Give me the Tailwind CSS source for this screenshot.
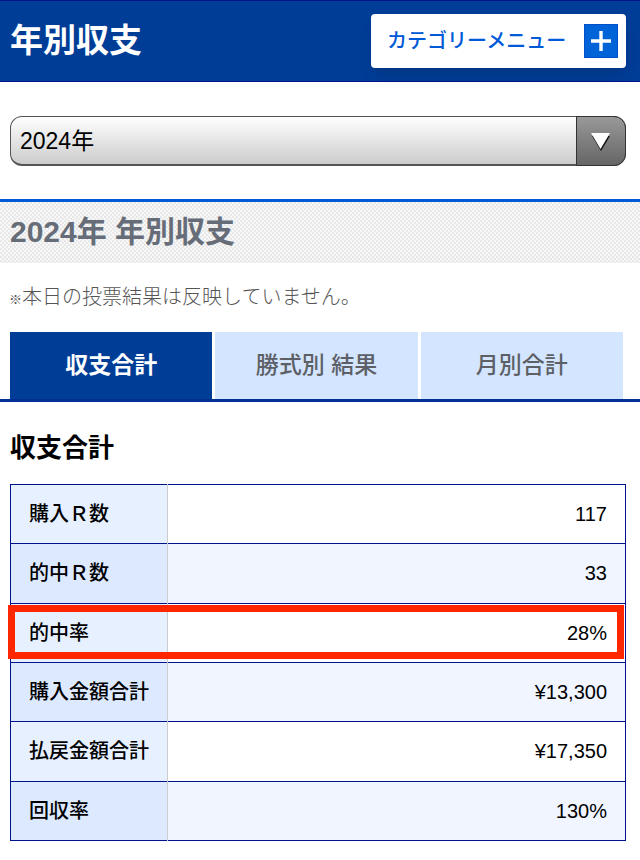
<!DOCTYPE html>
<html lang="ja">
<head>
  <meta charset="UTF-8" />
  <meta name="viewport" content="width=device-width, initial-scale=1.0"/>
  <title>年別収支</title>
  <script src="https://cdn.jsdelivr.net/npm/@tailwindcss/browser@4"></script>
</head>
<body class="bg-white text-black font-['Liberation_Sans','Noto_Sans_CJK_JP',sans-serif]">
  <!-- Header -->
  <header class="flex items-center justify-between h-[82px] pl-[10px] pr-[14px] bg-[#003d96] border-y border-[#00128c]">
    <h1 class="text-[33px] leading-10 font-bold text-white">年別収支</h1>
    <button type="button" class="flex items-center justify-between w-[255px] h-[54px] pl-4 pr-2 rounded bg-white text-[20px] font-medium text-[#0059d6] shadow-lg">
      カテゴリーメニュー
      <svg class="w-[34px] h-[34px]" viewBox="0 0 34 34" aria-hidden="true">
        <rect width="34" height="34" fill="#0050cc"/>
        <rect x="1" y="1" width="32" height="32" fill="#0064d8"/>
        <path d="M17 7v20M7 17h20" stroke="#fff" stroke-width="3.4"/>
      </svg>
    </button>
  </header>

  <!-- Year -->
  <form class="relative ml-[10px] mr-[14px] mt-[34px]">
    <select aria-label="年" class="block w-full h-[50px] pl-[9px] pr-14 pt-[2px] appearance-none rounded-xl border border-b-2 border-[#555] bg-linear-to-b from-white to-[#cccccc] text-[23px]">
      <option>2024年</option>
    </select>
    <span class="absolute inset-y-0 right-0 w-[50px] flex items-center justify-center rounded-r-xl border border-[#333] bg-linear-to-b from-[#999] to-[#666] pointer-events-none">
      <svg class="w-5 h-5" viewBox="0 0 20 20" aria-hidden="true">
        <path d="M1 5h18L10 20z" fill="#111"/>
        <path d="M0 2h19L9.500 18z" fill="#fff"/>
      </svg>
    </span>
  </form>

  <!-- Year title -->
  <h2 class="mt-[33px] h-[64px] px-[10px] border-t-3 border-[#0059d6] bg-[conic-gradient(#e8e8e8_25%,#f7f7f7_0_50%,#e8e8e8_0_75%,#f7f7f7_0)] bg-[length:4px_4px] text-[30px] leading-[60px] font-bold text-[#666d78]">2024年 年別収支</h2>
  <p class="mt-[18px] px-[9px] text-[20px] leading-8 font-light text-[#555]"><span class="text-[13px] font-normal">※</span>本日の投票結果は反映していません。</p>

  <!-- Tabs -->
  <nav class="mt-4 grid grid-cols-3 gap-[3px] pl-[10px] pr-[17px] border-b-3 border-[#003094] text-[23px] leading-[67px] font-medium text-center text-[#5c6066]">
    <a href="#total" class="bg-[#003d96] text-white font-bold">収支合計</a>
    <a href="#type" class="bg-[#d4e5ff]">勝式別 結果</a>
    <a href="#month" class="bg-[#d4e5ff]">月別合計</a>
  </nav>

  <!-- Totals -->
  <section id="total" class="pl-[10px] pr-[14px] pb-4">
    <h3 class="mt-[26px] mb-4 text-[26px] leading-10 font-bold">収支合計</h3>
    <table class="w-full h-[357px] border-collapse border border-[#00128c] text-[20px]">
      <tbody>
        <tr class="border-b border-[#00128c]">
          <th scope="row" class="w-[157px] pl-[18px] bg-[#e6f0ff] border-r border-r-[#ccc] text-left font-medium">購入Ｒ数</th>
          <td class="pr-[18px] text-right">117</td>
        </tr>
        <tr class="border-b border-[#00128c]">
          <th scope="row" class="pl-[18px] bg-[#dce9ff] border-r border-r-[#ccc] text-left font-medium">的中Ｒ数</th>
          <td class="pr-[18px] bg-[#f0f5ff] text-right">33</td>
        </tr>
        <tr class="relative border-b border-[#00128c]">
          <th scope="row" class="pl-[18px] bg-[#e6f0ff] border-r border-r-[#ccc] text-left font-medium">的中率</th>
          <td class="pr-[18px] text-right">28%<span class="absolute top-[2px] bottom-[2px] -left-[3px] right-[2px] border-7 border-[#ff2600]"></span></td>
        </tr>
        <tr class="border-b border-[#00128c]">
          <th scope="row" class="pl-[18px] bg-[#dce9ff] border-r border-r-[#ccc] text-left font-medium">購入金額合計</th>
          <td class="pr-[18px] bg-[#f0f5ff] text-right">¥13,300</td>
        </tr>
        <tr class="border-b border-[#00128c]">
          <th scope="row" class="pl-[18px] bg-[#e6f0ff] border-r border-r-[#ccc] text-left font-medium">払戻金額合計</th>
          <td class="pr-[18px] text-right">¥17,350</td>
        </tr>
        <tr>
          <th scope="row" class="pl-[18px] bg-[#dce9ff] border-r border-r-[#ccc] text-left font-medium">回収率</th>
          <td class="pr-[18px] bg-[#f0f5ff] text-right">130%</td>
        </tr>
      </tbody>
    </table>
  </section>
</body>
</html>
